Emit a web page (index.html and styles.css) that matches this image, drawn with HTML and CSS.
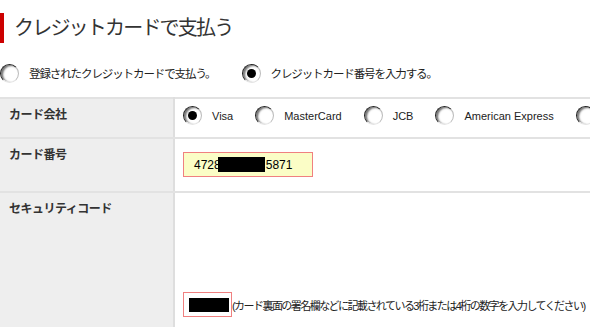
FILE: index.html
```html
<!DOCTYPE html>
<html lang="ja">
<head>
    <meta charset="UTF-8">
    <title>クレジットカードで支払う</title>
    <link rel="stylesheet" href="styles.css">
</head>
<body>

    <h1 class="title">クレジットカードで支払う</h1>

    <div class="pay-mode">
        <label class="opt"><span class="radio"></span>登録されたクレジットカードで支払う。</label>
        <label class="opt"><span class="radio checked"></span>クレジットカード番号を入力する。</label>
    </div>

    <table class="card-form">
        <tr class="row-brand">
            <th>カード会社</th>
            <td>
                <div class="brands">
                    <label class="opt"><span class="radio checked"></span>Visa</label>
                    <label class="opt"><span class="radio"></span>MasterCard</label>
                    <label class="opt"><span class="radio"></span>JCB</label>
                    <label class="opt"><span class="radio"></span>American Express</label>
                    <label class="opt"><span class="radio"></span></label>
                </div>
            </td>
        </tr>
        <tr class="row-number">
            <th>カード番号</th>
            <td>
                <div class="field number">4728<span class="mask"></span>5871</div>
            </td>
        </tr>
        <tr class="row-cvv">
            <th>セキュリティコード</th>
            <td>
                <div class="cvv">
                    <div class="field code"><span class="mask"></span></div>
                    <span class="note">(カード裏面の署名欄などに記載されている3桁または4桁の数字を入力してください)</span>
                </div>
            </td>
        </tr>
    </table>

</body>
</html>
```

FILE: styles.css
```css
* {
    margin: 0;
    padding: 0;
    box-sizing: border-box;
}

body {
    font-family: 'Liberation Sans', 'Noto Sans CJK JP', sans-serif;
    font-size: 12px;
    color: #222;
    background: #fff;
    overflow: hidden;
}

.title {
    margin-top: 13px;
    height: 30px;
    line-height: 30px;
    border-left: 4px solid #cc0000;
    padding-left: 10px;
    font-size: 20px;
    font-weight: normal;
    letter-spacing: -1.8px;
    color: #333;
}

.pay-mode {
    display: flex;
    gap: 26px;
    margin-top: 20px;
    height: 20px;
    font-size: 11.5px;
    letter-spacing: -1.1px;
}

.opt {
    display: inline-flex;
    align-items: center;
    gap: 10px;
    white-space: nowrap;
    flex-shrink: 0;
}

.radio {
    display: inline-block;
    position: relative;
    width: 19px;
    height: 19px;
    border-radius: 50%;
    background: #fff;
    border: 1px solid;
    border-color: #222 #bbb #e4e4e4 #222;
    box-shadow: inset 2px 1px 2px rgba(0, 0, 0, 0.55);
    flex-shrink: 0;
}

.radio.checked::after {
    content: "";
    position: absolute;
    top: 4px;
    left: 4px;
    width: 9px;
    height: 9px;
    border-radius: 50%;
    background: #000;
}

.card-form {
    margin-top: 14px;
    width: 100%;
    table-layout: fixed;
    border-collapse: collapse;
    border-top: 2px solid #e2e2e2;
}

.card-form th {
    width: 174px;
    background: #eeeeee;
    border-right: 2px solid #dedede;
    border-bottom: 2px solid #e2e2e2;
    text-align: left;
    vertical-align: top;
    padding: 6px 9px;
    font-size: 12px;
    font-weight: bold;
    letter-spacing: -0.5px;
    color: #333;
}

.card-form td {
    border-bottom: 2px solid #e2e2e2;
    padding: 0 0 0 8px;
    vertical-align: top;
}

.row-brand th,
.row-brand td {
    height: 40px;
}

.brands {
    display: flex;
    gap: 22px;
    padding-top: 7px;
    font-size: 11px;
}

.row-number th,
.row-number td {
    height: 54px;
}

.field {
    display: flex;
    align-items: center;
    height: 25px;
    border: 1px solid #f08080;
}

.number {
    width: 130px;
    margin-top: 13px;
    padding-left: 10px;
    background: #fbfdc6;
    font-size: 12px;
    color: #000;
}

.number .mask {
    display: inline-block;
    width: 47px;
    height: 15px;
    background: #000;
    margin-left: -3px;
    margin-right: 1px;
}

.row-cvv th,
.row-cvv td {
    height: 136px;
}

.cvv {
    display: flex;
    align-items: center;
    padding-top: 99px;
}

.code {
    width: 49px;
    padding-left: 5px;
    background: #fff;
}

.code .mask {
    display: block;
    width: 40px;
    height: 14px;
    background: #000;
}

.note {
    font-size: 11px;
    letter-spacing: -1.55px;
    white-space: nowrap;
    color: #222;
}
```
